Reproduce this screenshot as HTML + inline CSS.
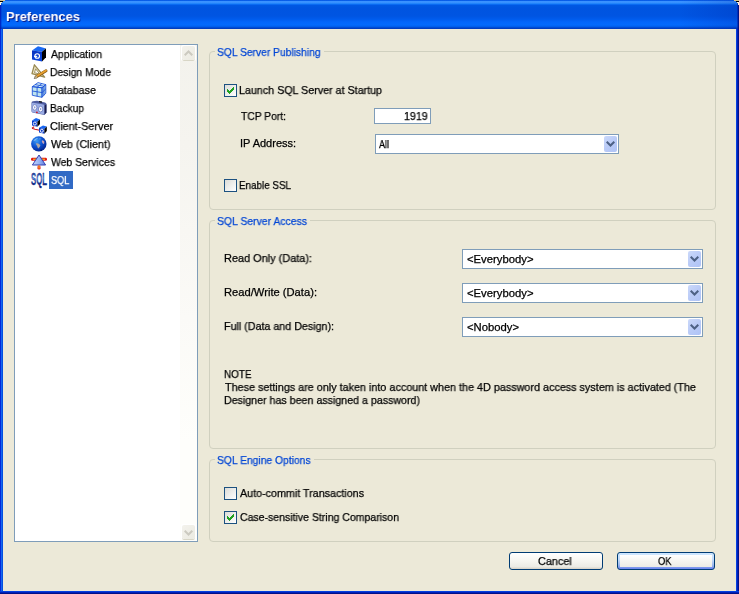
<!DOCTYPE html>
<html>
<head>
<meta charset="utf-8">
<title>Preferences</title>
<style>
html,body{margin:0;padding:0;}
body{width:739px;height:594px;overflow:hidden;background:#ECE9D8;position:relative;
 font-family:"Liberation Sans",sans-serif;font-size:11px;color:#000;}
.abs{position:absolute;}
#win{position:absolute;left:0;top:0;width:739px;height:594px;background:#ECE9D8;overflow:hidden;}
#title{position:absolute;left:0;top:0;width:739px;height:29px;
 background:linear-gradient(to bottom,#0054E3 0px,#0A5FEA 0.6px,#3A92FF 1.2px,#3A92FF 2.4px,#2285FB 3.5px,#0A6AF2 4.5px,#0058E3 5.5px,#0054E0 8px,#0055E2 16px,#005BEC 19px,#0266FA 22px,#036AFC 25px,#005FEC 26.5px,#004CD4 27.5px,#0036B4 29px);}
#tshade{position:absolute;left:680px;top:0;width:59px;height:29px;background:linear-gradient(to right,rgba(0,30,160,0),rgba(0,30,160,0.22));}
#title span{will-change:transform;position:absolute;left:5.8px;top:8.8px;font-weight:bold;font-size:13.4px;line-height:15px;color:#fff;white-space:nowrap;transform-origin:0 0;text-shadow:1px 1px 0 #0a1883;}
#bl{position:absolute;left:0;top:29px;width:3px;height:565px;background:linear-gradient(to right,#0528D8 0,#0528D8 1px,#1668F0 1px,#1668F0 2px,#0450E0 2px);}
#br{position:absolute;left:736px;top:29px;width:3px;height:565px;background:linear-gradient(to right,#0440E0 0,#0440E0 1px,#0020B8 1px,#0020B8 2px,#001088 2px);}
#bb{position:absolute;left:0;top:591px;width:739px;height:3px;background:linear-gradient(to bottom,#0440E0 0,#0440E0 1px,#0020B8 1px,#0020B8 2px,#001088 2px);}
#list{position:absolute;left:14px;top:44px;width:182px;height:496px;border:1px solid #7F9DB9;background:#fff;}
#track{position:absolute;left:180px;top:45px;width:17px;height:496px;background:linear-gradient(to bottom,#F3F2EC 0,#F5F4EF 20%,#FBFAF7 55%,#FEFEFB 80%);}
.sbtn{position:absolute;left:181px;width:15px;height:16px;background:#fff;border-radius:2px;}
.sbtn i{position:absolute;left:1px;top:1px;width:13px;height:14px;border-radius:2px;background:linear-gradient(135deg,#F3F2EC,#ECEBE2);box-shadow:0 1px 0 #D8D6C6;}
.row{-webkit-text-stroke:0.25px;will-change:transform;position:absolute;height:18px;line-height:18px;white-space:nowrap;transform-origin:0 0;}
.sel{color:#fff;}
.ico{position:absolute;left:31px;width:16px;height:16px;overflow:visible;}
.grp{position:absolute;border:1px solid #D0D0BF;border-radius:4px;}
.gap{position:absolute;height:3px;background:#ECE9D8;}
.t{-webkit-text-stroke:0.25px;will-change:transform;position:absolute;white-space:nowrap;line-height:13px;height:13px;transform-origin:0 0;}
.gl{color:#0046D5;}
.cb{position:absolute;width:11px;height:11px;border:1px solid #1C5180;background:linear-gradient(135deg,#DCDCD7,#fff);}
.cb svg{position:absolute;left:2px;top:2px;width:7px;height:7px;}
.field{position:absolute;border:1px solid #7F9DB9;background:#fff;}
.dd{position:absolute;width:13px;height:16px;border-radius:2px;background:linear-gradient(135deg,#CBD9FA,#BACBF7 50%,#AFC3F6);}
.dd svg{position:absolute;left:2px;top:5px;width:9px;height:6px;}
.btn{position:absolute;height:16px;border:1px solid #003C74;border-radius:3px;background:linear-gradient(to bottom,#fff,#F6F5F0 50%,#ECEBE5 85%,#D6D0C5);}
.btn.def{background:linear-gradient(to bottom,#CEE7FF 0,#C4DCFA 40%,#9DB9EC 75%,#6982EE 100%);}
.btn.def:before{content:"";position:absolute;left:2px;top:2px;right:2px;bottom:2px;background:linear-gradient(to bottom,#fff,#F6F5F0 50%,#ECEBE5);}
</style>
</head>
<body>
<div id="win">
 <div id="title"><div id="tshade"></div><div class="abs" style="left:0;top:4px;width:1px;height:25px;background:rgba(0,20,180,0.75)"></div><div class="abs" style="left:1px;top:3px;width:1px;height:26px;background:rgba(0,40,200,0.35)"></div><div class="abs" style="left:738px;top:4px;width:1px;height:25px;background:rgba(0,10,120,0.85)"></div><div class="abs" style="left:737px;top:3px;width:1px;height:26px;background:rgba(0,20,160,0.5)"></div><span style="transform:scaleX(0.9650)">Preferences</span></div>
 <div class="abs" style="left:0;top:0;width:5px;height:1px;background:#D2C38F"></div>
 <div class="abs" style="left:0;top:1px;width:3px;height:1px;background:#000"></div>
 <div class="abs" style="left:0;top:2px;width:2px;height:1px;background:#FFF8DC"></div>
 <div class="abs" style="left:0;top:3px;width:1px;height:2px;background:#FFF8DC"></div>
 <div class="abs" style="left:734px;top:0;width:5px;height:1px;background:#D2C38F"></div>
 <div class="abs" style="left:736px;top:1px;width:3px;height:1px;background:#000"></div>
 <div class="abs" style="left:737px;top:2px;width:2px;height:1px;background:#FFF8DC"></div>
 <div class="abs" style="left:738px;top:3px;width:1px;height:2px;background:#FFF8DC"></div>
 <div id="bl"></div><div id="br"></div><div id="bb"></div>

 <div id="list"></div>
 <div id="track"></div>
 <div class="sbtn" style="top:45px"><i></i><svg class="abs" style="left:3px;top:5px" width="9" height="6" viewBox="0 0 9 6"><path d="M0.7 5.3 L4.5 1.5 L8.3 5.3" fill="none" stroke="#CCCAC0" stroke-width="2"/></svg></div>
 <div class="sbtn" style="top:524px"><i></i><svg class="abs" style="left:3px;top:6px" width="9" height="6" viewBox="0 0 9 6"><path d="M0.7 0.7 L4.5 4.5 L8.3 0.7" fill="none" stroke="#CCCAC0" stroke-width="2"/></svg></div>
 <div class="abs" style="left:49px;top:171px;width:24px;height:18px;background:#316AC5"></div>

 <div class="grp" style="left:209px;top:51px;width:505px;height:157px"></div>
 <div class="gap" style="left:215px;top:50px;width:109px"></div>
 <div class="grp" style="left:209px;top:220px;width:505px;height:227px"></div>
 <div class="gap" style="left:215px;top:219px;width:95px"></div>
 <div class="grp" style="left:209px;top:459px;width:505px;height:81px"></div>
 <div class="gap" style="left:215px;top:458px;width:99px"></div>

 <div class="cb" style="left:224px;top:84px"><svg viewBox="0 0 7 7"><path d="M0 2h1v1h1v1h1v-1h1v-1h1v-1h1v-1h1v3h-1v1h-1v1h-1v1h-1v1h-1v-1h-1v-1h-1z" fill="#21A121" shape-rendering="crispEdges"/></svg></div>
 <div class="cb" style="left:224px;top:179px"></div>
 <div class="cb" style="left:224px;top:487px"></div>
 <div class="cb" style="left:224px;top:511px"><svg viewBox="0 0 7 7"><path d="M0 2h1v1h1v1h1v-1h1v-1h1v-1h1v-1h1v3h-1v1h-1v1h-1v1h-1v1h-1v-1h-1v-1h-1z" fill="#21A121" shape-rendering="crispEdges"/></svg></div>

 <div class="field" style="left:374px;top:108px;width:55px;height:14px"></div>
 <div class="field" style="left:375px;top:134px;width:242px;height:18px"></div>
 <div class="dd" style="left:604px;top:136px"><svg viewBox="0 0 9 6"><path d="M0.7 0.7 L4.5 4.5 L8.3 0.7" fill="none" stroke="#4D6185" stroke-width="2"/></svg></div>
 <div class="field" style="left:462px;top:249px;width:239px;height:18px"></div>
 <div class="dd" style="left:688px;top:251px"><svg viewBox="0 0 9 6"><path d="M0.7 0.7 L4.5 4.5 L8.3 0.7" fill="none" stroke="#4D6185" stroke-width="2"/></svg></div>
 <div class="field" style="left:462px;top:283px;width:239px;height:18px"></div>
 <div class="dd" style="left:688px;top:285px"><svg viewBox="0 0 9 6"><path d="M0.7 0.7 L4.5 4.5 L8.3 0.7" fill="none" stroke="#4D6185" stroke-width="2"/></svg></div>
 <div class="field" style="left:462px;top:317px;width:239px;height:18px"></div>
 <div class="dd" style="left:688px;top:319px"><svg viewBox="0 0 9 6"><path d="M0.7 0.7 L4.5 4.5 L8.3 0.7" fill="none" stroke="#4D6185" stroke-width="2"/></svg></div>

 <div class="btn" style="left:509px;top:552px;width:92px"></div>
 <div class="btn def" style="left:617px;top:552px;width:96px"></div>

 <svg class="ico" style="top:46px" viewBox="0 0 16 16"><defs><linearGradient id="cf" x1="0" y1="0" x2="0.4" y2="1"><stop offset="0" stop-color="#0830BC"/><stop offset="1" stop-color="#0E48DC"/></linearGradient></defs><polygon points="1,4.5 7,0.3 15,2.4 11,5.8" fill="#1A6AF4"/><polygon points="1,4.5 11,5.8 11,15.6 1,13.5" fill="url(#cf)"/><polygon points="11,5.8 15,2.4 15,11.3 11,15.6" fill="#000"/><circle cx="6.2" cy="10" r="2.3" fill="none" stroke="#fff" stroke-width="1.1"/><path d="M3 10.4h3.2" stroke="#fff" stroke-width="1.1"/></svg>
 <svg class="ico" style="top:64px" viewBox="0 0 16 16"><polygon points="3.4,0.8 1,9.6 13.6,13.2" fill="#EFE8CC" stroke="#988850" stroke-width="1.3" stroke-linejoin="round"/><polygon points="4.6,4.8 3.5,8.7 8.9,10.2" fill="#fff" stroke="#988850" stroke-width="0.9" stroke-linejoin="round"/><path d="M15 6.8 L5 13" stroke="#8A5A10" stroke-width="3" stroke-linecap="round"/><path d="M15 6.6 L5.4 12.5" stroke="#E8A030" stroke-width="1.8" stroke-linecap="round"/><polygon points="5.4,11.6 6.4,13.4 3,14.6" fill="#F4E4B8" stroke="#555" stroke-width="0.4"/><polygon points="3,14.6 4,13.6 4.4,14.2" fill="#222"/></svg>
 <svg class="ico" style="top:82px" viewBox="0 0 16 16"><polygon points="1.3,4.6 7,0.6 14.8,2.6 11,5.8" fill="#D4EEF6"/><polygon points="1.3,4.6 11,5.8 11,15.3 1.3,13.3" fill="#BFE4EE"/><polygon points="11,5.8 14.8,2.6 14.8,11.2 11,15.3" fill="#A6CEE6"/><g fill="none" stroke="#1A50D8" stroke-width="0.85" stroke-linejoin="round"><polygon points="1.3,4.6 7,0.6 14.8,2.6 11,5.8"/><polygon points="1.3,4.6 11,5.8 11,15.3 1.3,13.3"/><polygon points="11,5.8 14.8,2.6 14.8,11.2 11,15.3"/><path d="M1.3 9 L11 10.6 L14.8 6.9 M6.1 5.2 L6.1 14.3 M12.9 4.2 L12.9 13.3 M4.1 2.6 L12.9 4.2 M10.9 1.6 L6.1 5.2"/></g></svg>
 <svg class="ico" style="top:100px" viewBox="0 0 16 16"><path d="M0.5 3 Q0.5 1.5 2 1.2 L6 0.8 L14 2.6 Q15.5 3 15.5 4.5 L15.5 12.5 L13.5 15 L1.5 12.5 Q0.5 12.2 0.5 11 Z" fill="#4E5CA0"/><path d="M0.8 4 Q0.8 2.6 2.2 2.8 L12.5 4.6 Q13.4 4.8 13.4 5.8 L13.4 14.6 L1.6 12.2 Q0.8 12 0.8 11 Z" fill="#9AACE4"/><path d="M13.6 5.5 L15.4 4.2 L15.4 12.4 L13.6 14.6 Z" fill="#1A1E50"/><rect x="8" y="1.2" width="3" height="1.3" fill="#111" transform="rotate(10 9.5 1.8)"/><ellipse cx="3.7" cy="7.4" rx="2.2" ry="2.8" fill="#fff" stroke="#5868B4" stroke-width="0.7"/><ellipse cx="9.6" cy="9.1" rx="2.2" ry="2.8" fill="#fff" stroke="#5868B4" stroke-width="0.7"/><ellipse cx="3.7" cy="7.4" rx="0.8" ry="1.1" fill="#8C9CD8"/><ellipse cx="9.6" cy="9.1" rx="0.8" ry="1.1" fill="#8C9CD8"/><circle cx="5.9" cy="12.3" r="0.9" fill="#D01020"/></svg>
 <svg class="ico" style="top:118px" viewBox="0 0 16 16"><path d="M1 10.2 L3.2 8.6 M1 10.2 L4 11.2 L8.5 12.2" fill="none" stroke="#C81818" stroke-width="1.1"/><polygon points="1,2.6 5,0 9,1.4 6.4,3.8" fill="#1867F2"/><polygon points="1,2.6 6.4,3.8 6.4,8.8 1,7.4" fill="#0A3CCB"/><polygon points="6.4,3.8 9,1.4 9,6 6.4,8.8" fill="#000"/><circle cx="3.8" cy="5.6" r="1.5" fill="none" stroke="#fff" stroke-width="0.9"/><polygon points="8,9.8 12,7.4 15.8,8.6 13.4,11" fill="#1867F2"/><polygon points="8,9.8 13.4,11 13.4,15.8 8,14.4" fill="#0A3CCB"/><polygon points="13.4,11 15.8,8.6 15.8,13 13.4,15.8" fill="#000"/><circle cx="10.8" cy="12.8" r="1.5" fill="none" stroke="#fff" stroke-width="0.9"/></svg>
 <svg class="ico" style="top:136px" viewBox="0 0 16 16"><defs><radialGradient id="gl" cx="0.36" cy="0.3" r="0.78"><stop offset="0" stop-color="#3C9CF6"/><stop offset="0.5" stop-color="#0C50D0"/><stop offset="1" stop-color="#031C84"/></radialGradient></defs><circle cx="7.8" cy="7.9" r="7.7" fill="url(#gl)"/><path d="M2.2 5.2 q1.2 -2.4 3.8 -3.2 q1.2 0.2 0.4 1 q-1.4 0.4 -1.8 1.6 q-1 0.2 -2.4 0.6z" fill="#9CCCF4" opacity="0.75"/><path d="M4.8 7.6 q1.6 -0.8 3 0.2 l1.6 1.4 q-0.4 2 -2.2 3.4 q-1 -1.2 -1 -2.6 q-1 -1 -1.4 -2.4z" fill="#C0B0A0" opacity="0.9"/><path d="M11 4.2 q1.8 0.2 2.4 1.6 l-0.4 2.2 q-1.4 0 -1.8 -1.4 q-0.6 -1.2 -0.2 -2.4z" fill="#D8A8B4" opacity="0.9"/><path d="M8 2.4 q1.4 -0.4 2.4 0.4 q-0.8 0.8 -2 0.6z" fill="#6CB0F0" opacity="0.7"/><circle cx="10.2" cy="14.2" r="0.6" fill="#001040"/></svg>
 <svg class="ico" style="top:154px" viewBox="0 0 16 16"><rect x="0" y="3.8" width="16" height="3" rx="1.4" fill="#E01818"/><rect x="2" y="4.6" width="12" height="1.4" fill="#F8A020"/><defs><linearGradient id="ws" x1="0" y1="0" x2="1" y2="0"><stop offset="0" stop-color="#C4D6FC"/><stop offset="0.55" stop-color="#96B0F2"/><stop offset="1" stop-color="#5A78DC"/></linearGradient></defs><polygon points="8,1 14.6,11 1.4,11" fill="url(#ws)" stroke="#3440B0" stroke-width="1" stroke-linejoin="round"/><rect x="6.5" y="11.6" width="3" height="4" rx="1.3" fill="#E01818"/><rect x="7.3" y="11.6" width="1.4" height="3" fill="#F8A020"/></svg>
 <svg class="ico" style="top:172px" viewBox="0 0 16 16"><defs><linearGradient id="sq" x1="0" y1="0" x2="0" y2="1"><stop offset="0" stop-color="#0A1E78"/><stop offset="0.45" stop-color="#5C8CD8"/><stop offset="0.7" stop-color="#1A3494"/><stop offset="1" stop-color="#081860"/></linearGradient></defs><text x="0" y="12.7" font-family="Liberation Sans, sans-serif" font-weight="bold" font-size="16" textLength="16" lengthAdjust="spacingAndGlyphs" fill="url(#sq)" stroke="#14288C" stroke-width="0.35">SQL</text></svg>

 <div class="row" style="left:51px;top:45px;transform:scaleX(0.9475)">Application</div>
 <div class="row" style="left:50px;top:63px;transform:scaleX(0.9409)">Design Mode</div>
 <div class="row" style="left:50px;top:81px;transform:scaleX(0.9768)">Database</div>
 <div class="row" style="left:50px;top:99px;transform:scaleX(0.9264)">Backup</div>
 <div class="row" style="left:50px;top:117px;transform:scaleX(0.9815)">Client-Server</div>
 <div class="row" style="left:51px;top:135px;transform:scaleX(0.9764)">Web (Client)</div>
 <div class="row" style="left:51px;top:153px;transform:scaleX(0.9460)">Web Services</div>
 <div class="row sel" style="left:50.6px;top:171px;transform:scaleX(0.8312)">SQL</div>
 <div class="t" style="left:239px;top:84px;transform:scaleX(0.9731)">Launch SQL Server at Startup</div>
 <div class="t" style="left:241px;top:110px;transform:scaleX(0.9357)">TCP Port:</div>
 <div class="t" style="left:240px;top:137px;transform:scaleX(0.9989)">IP Address:</div>
 <div class="t" style="left:239px;top:179px;transform:scaleX(0.8949)">Enable SSL</div>
 <div class="t" style="left:224px;top:252px;transform:scaleX(0.9926)">Read Only (Data):</div>
 <div class="t" style="left:224px;top:286px;transform:scaleX(1.0164)">Read/Write (Data):</div>
 <div class="t" style="left:224px;top:320px;transform:scaleX(0.9725)">Full (Data and Design):</div>
 <div class="t" style="left:224px;top:368px;transform:scaleX(0.8998)">NOTE</div>
 <div class="t" style="left:225px;top:381px;transform:scaleX(0.9813)">These settings are only taken into account when the 4D password access system is activated (The</div>
 <div class="t" style="left:224px;top:394px;transform:scaleX(0.9683)">Designer has been assigned a password)</div>
 <div class="t" style="left:240px;top:487px;transform:scaleX(0.9752)">Auto-commit Transactions</div>
 <div class="t" style="left:240px;top:511px;transform:scaleX(0.9561)">Case-sensitive String Comparison</div>
 <div class="t gl" style="left:217px;top:46px;transform:scaleX(0.9335)">SQL Server Publishing</div>
 <div class="t gl" style="left:217px;top:215px;transform:scaleX(0.9477)">SQL Server Access</div>
 <div class="t gl" style="left:217px;top:454px;transform:scaleX(0.9360)">SQL Engine Options</div>
 <div class="t" style="left:403.7px;top:110px;transform:scaleX(0.9720)">1919</div>
 <div class="t" style="left:379px;top:138px;transform:scaleX(0.8174)">All</div>
 <div class="t" style="left:467px;top:253px;transform:scaleX(1.0258)">&lt;Everybody&gt;</div>
 <div class="t" style="left:467px;top:287px;transform:scaleX(1.0258)">&lt;Everybody&gt;</div>
 <div class="t" style="left:467px;top:321px;transform:scaleX(1.0243)">&lt;Nobody&gt;</div>
 <div class="t" style="left:537.8px;top:555px;transform:scaleX(0.9839)">Cancel</div>
 <div class="t" style="left:658px;top:555px;transform:scaleX(0.8487)">OK</div>
</div>
</body>
</html>
